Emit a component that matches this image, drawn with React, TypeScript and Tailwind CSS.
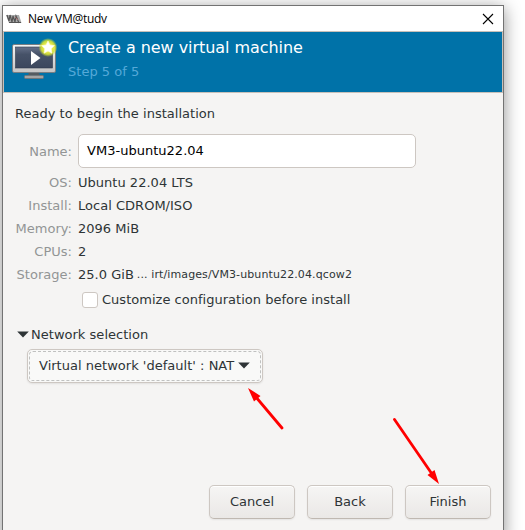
import React from "react";

const details = [
  ["OS:", "Ubuntu 22.04 LTS"],
  ["Install:", "Local CDROM/ISO"],
  ["Memory:", "2096 MiB"],
  ["CPUs:", "2"],
];

function VmLogo() {
  return (
    <svg width="16" height="10" viewBox="0 0 16 10" className="shrink-0">
      <path d="M0 1H13L15.500 9H3Z" fill="#aaa" />
      <path d="M1 1l2 6 1-6 2 7 1-6 2 6 1-6 3 7" fill="none" stroke="#555" strokeWidth="1.200" />
      <path d="M3 8.500h12" stroke="#555" />
      <path d="M9 3l3 3" stroke="#a66d6d" />
    </svg>
  );
}

function MonitorIcon() {
  return (
    <svg width="46" height="42" viewBox="0 0 46 42" className="shrink-0">
      <defs>
        <linearGradient id="screen" x1="0" y1="0" x2="0" y2="1">
          <stop offset="0" stopColor="#66718a" />
          <stop offset=".35" stopColor="#465268" />
          <stop offset="1" stopColor="#3c475d" />
        </linearGradient>
        <linearGradient id="frame" x1="0" y1="0" x2="0" y2="1">
          <stop offset="0" stopColor="#f4f4f4" />
          <stop offset="1" stopColor="#c4c4c4" />
        </linearGradient>
        <radialGradient id="glow">
          <stop offset=".35" stopColor="#f3f35a" />
          <stop offset=".72" stopColor="#d8e332" stopOpacity=".9" />
          <stop offset="1" stopColor="#bddb37" stopOpacity="0" />
        </radialGradient>
      </defs>
      <path d="M17 34h10l1 4H16z" fill="#555b60" />
      <rect x="12.500" y="37.500" width="19" height="3" rx="1" fill="#a4a4a4" stroke="#6e777b" />
      <rect x=".5" y="6.500" width="43" height="28" rx="1.500" fill="url(#frame)" stroke="#777e83" />
      <rect x="3.500" y="9" width="37" height="21" fill="url(#screen)" stroke="#303b4c" strokeWidth=".6" />
      <path d="M19 13L28.500 20L19 27Z" fill="white" />
      <circle cx="36" cy="9.500" r="9.500" fill="url(#glow)" />
      <path d="M36 3l2 4 4.400.6-3.200 3.100.8 4.500-4-2.100-4 2.100.8-4.500-3.200-3.100 4.400-.6z" fill="white" stroke="#ffffd4" strokeWidth=".6" />
    </svg>
  );
}

function Caret() {
  return (
    <svg width="12" height="7" viewBox="0 0 12 7" className="shrink-0">
      <path d="M.2.500h11.600L6 6.600z" fill="#2e3436" />
    </svg>
  );
}

function DialogButton({ children }: { children: string }) {
  return (
    <button className="h-[34px] w-[86px] rounded-[5px] border border-[#cdc7c2] border-b-[#bfb8b1] bg-linear-to-b from-[#f6f5f4] to-[#eae8e6] pb-px text-[13px] shadow-[0_1px_2px_#00000012,inset_0_1px_white]">
      {children}
    </button>
  );
}

export default function App() {
  return (
    <main className="relative h-[530px] w-[525px] overflow-hidden bg-white pl-[2px] pt-[5px] font-['DejaVu_Sans',sans-serif] text-[13px] leading-[23px] tracking-[0.02px] text-[#2e3436]">
      <section className="flex h-[535px] w-[502px] flex-col border border-[#737373] bg-[#f5f4f3] shadow-[0_3px_16px_#00000070]">
        <header className="flex h-[25px] shrink-0 items-center bg-white pl-[3px] pr-[9px] text-black">
          <VmLogo />
          <span className="ml-[6px] font-['Open_Sans',sans-serif] text-[12px] leading-[18px] tracking-[-0.28px]">New VM@tudv</span>
          <svg width="12" height="12" viewBox="0 0 12 12" className="ml-auto">
            <path d="M1 1l10 10M11 1L1 11" stroke="black" strokeWidth="1.100" />
          </svg>
        </header>
        <div className="flex h-[62px] shrink-0 border border-[#c7c0b9] bg-[#0072a8] pl-[8px] pt-[6px] text-white">
          <MonitorIcon />
          <div className="ml-[10px]">
            <h1 className="text-[16px] leading-[20px] tracking-[-0.05px]">Create a new virtual machine</h1>
            <p className="mt-[4px] leading-[20px] text-[#55a9d8]">Step 5 of 5</p>
          </div>
        </div>
        <div className="pl-3">
          <p className="mt-[9px] leading-[24px]">Ready to begin the installation</p>
          <div className="mt-[8px] flex items-center">
            <label className="w-[57px] text-right text-[#929595]">Name:</label>
            <div className="ml-[6px] flex h-[34px] w-[338px] items-center rounded-[5px] border border-[#cdc7c2] bg-white pb-px pl-2 text-black">VM3-ubuntu22.04</div>
          </div>
          <dl className="mt-[3px] grid grid-cols-[57px_1fr] gap-x-[6px]">
            {details.map(([label, value]) => (
              <React.Fragment key={label}>
                <dt className="whitespace-nowrap text-right text-[#929595]">{label}</dt>
                <dd>{value}</dd>
              </React.Fragment>
            ))}
            <dt className="text-right text-[#929595]">Storage:</dt>
            <dd className="flex whitespace-pre">25.0 GiB<span className="ml-[3px] text-[11px] tracking-[0.11px]">... irt/images/VM3-ubuntu22.04.qcow2</span></dd>
          </dl>
          <label className="ml-[67px] mt-[2px] flex items-center"><span className="mr-1 size-4 rounded-[3px] border border-[#cdc7c2] bg-white" />Customize configuration before install</label>
          <div className="ml-[2px] mt-[12px] flex items-center gap-[2px]"><Caret />Network selection</div>
          <button className="ml-3 mt-[3px] flex h-[34px] w-[236px] rounded-[5px] border border-[#cdc7c2] bg-[#f9f9f8] p-px shadow-[0_1px_2px_#00000015]">
            <span className="flex h-full w-full items-center rounded-[4px] border border-dashed border-[#c0c1c0] pb-px pl-[9px]">Virtual network 'default' : NAT<span className="ml-[4px]"><Caret /></span></span>
          </button>
        </div>
        <footer className="mt-[102px] flex gap-3 pl-[206px]"><DialogButton>Cancel</DialogButton><DialogButton>Back</DialogButton><DialogButton>Finish</DialogButton></footer>
      </section>
      <svg className="pointer-events-none absolute left-0 top-0" width="525" height="530">
        <path d="M282 428L255 396M394.500 419.500L432 474" stroke="red" strokeWidth="2.800" strokeLinecap="round" />
        <path d="M248 388L260.500 396L254 401.500ZM439 484L427.500 475L434.500 470Z" fill="red" />
      </svg>
    </main>
  );
}
